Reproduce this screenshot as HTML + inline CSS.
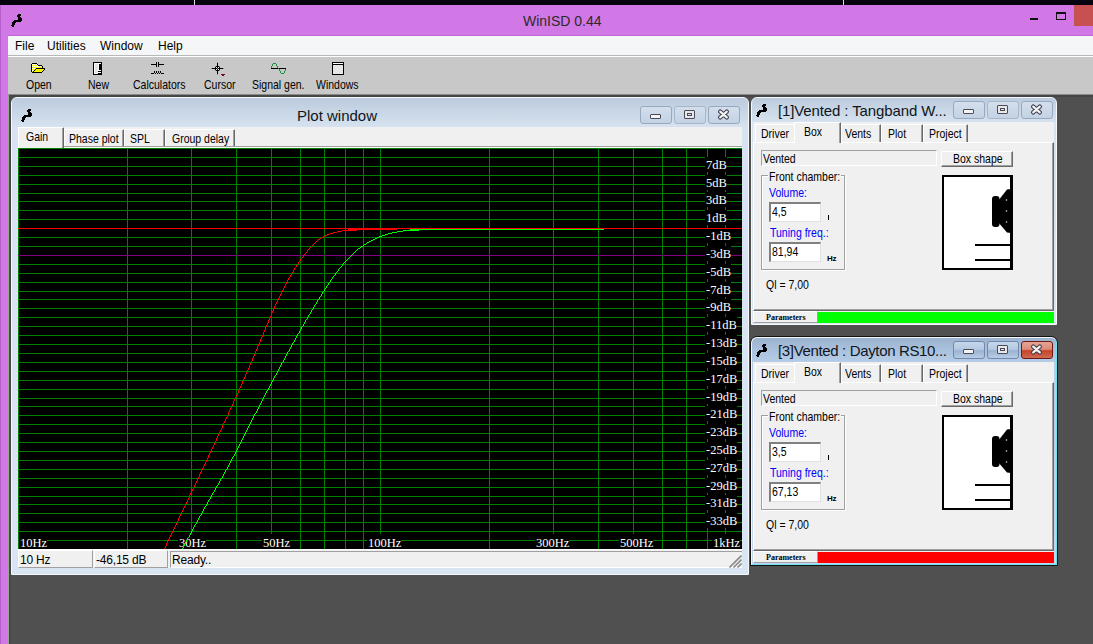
<!DOCTYPE html><html><head><meta charset='utf-8'><style>
*{margin:0;padding:0;box-sizing:border-box}
html,body{width:1093px;height:644px;overflow:hidden;position:relative;background:#505050;font-family:"Liberation Sans",sans-serif}
.a{position:absolute}
.t{position:absolute;white-space:nowrap;line-height:1}
.ms{font-size:10.5px;line-height:1.5;letter-spacing:0px;transform:scaleY(1.176);transform-origin:0 0}
</style></head><body><div class="a" style="left:0px;top:0px;width:1093px;height:5px;background:#07040f"></div><div class="a" style="left:194px;top:0px;width:1px;height:5px;background:#ddd"></div><div class="a" style="left:843px;top:0px;width:1px;height:5px;background:#ddd"></div><div class="a" style="left:0px;top:5px;width:1093px;height:31px;background:#d277e6"></div><div class="a" style="left:0px;top:5px;width:8px;height:639px;background:#d277e6;border-left:1px solid #b660cc"></div><svg class="a" style="left:11px;top:14px" width="11" height="13" shape-rendering="crispEdges"><path d="M7 0h1v1h-1zM8 0h1v1h-1zM9 0h1v1h-1zM6 1h1v1h-1zM7 1h1v1h-1zM8 1h1v1h-1zM9 1h1v1h-1zM6 2h1v1h-1zM7 2h1v1h-1zM8 2h1v1h-1zM7 3h1v1h-1zM8 3h1v1h-1zM9 3h1v1h-1zM7 4h1v1h-1zM8 4h1v1h-1zM9 4h1v1h-1zM10 4h1v1h-1zM7 5h1v1h-1zM8 5h1v1h-1zM9 5h1v1h-1zM10 5h1v1h-1zM3 6h1v1h-1zM4 6h1v1h-1zM5 6h1v1h-1zM6 6h1v1h-1zM7 6h1v1h-1zM8 6h1v1h-1zM9 6h1v1h-1zM10 6h1v1h-1zM2 7h1v1h-1zM3 7h1v1h-1zM4 7h1v1h-1zM5 7h1v1h-1zM6 7h1v1h-1zM7 7h1v1h-1zM8 7h1v1h-1zM9 7h1v1h-1zM1 8h1v1h-1zM2 8h1v1h-1zM3 8h1v1h-1zM4 8h1v1h-1zM1 9h1v1h-1zM2 9h1v1h-1zM3 9h1v1h-1zM1 10h1v1h-1zM2 10h1v1h-1zM3 10h1v1h-1zM0 11h1v1h-1zM1 11h1v1h-1zM2 11h1v1h-1zM1 12h1v1h-1zM2 12h1v1h-1z" fill="#000"/></svg><div class="t" style="left:523px;top:14.36px;font-size:14px;letter-spacing:0px;color:#2a2a2a">WinISD 0.44</div><div class="a" style="left:1030px;top:18px;width:8px;height:2px;background:#111"></div><div class="a" style="left:1056px;top:12px;width:10px;height:8px;border:1px solid #111;border-top-width:2px"></div><div class="a" style="left:1074px;top:5px;width:19px;height:21px;background:#c75050"></div><div class="a" style="left:8px;top:35px;width:1085px;height:22px;background:#f5f6f7;border-top:1px solid #c06ad6"></div><div class="a" style="left:8px;top:55px;width:1085px;height:1px;background:#b8b8b8"></div><div class="a" style="left:8px;top:56px;width:1085px;height:1px;background:#fff"></div><div class="t" style="left:15px;top:39.89px;font-size:12px;letter-spacing:0px;color:#000">File</div><div class="t" style="left:47px;top:39.89px;font-size:12px;letter-spacing:0px;color:#000">Utilities</div><div class="t" style="left:100px;top:39.89px;font-size:12px;letter-spacing:0px;color:#000">Window</div><div class="t" style="left:158px;top:39.89px;font-size:12px;letter-spacing:0px;color:#000">Help</div><div class="a" style="left:8px;top:57px;width:1085px;height:38px;background:#c8c8c8"></div><div class="a" style="left:8px;top:94px;width:1085px;height:1px;background:#8a8a8a"></div><div class="a" style="left:8px;top:95px;width:1085px;height:2px;background:#464646"></div><div class="a" style="left:8px;top:95px;width:1px;height:549px;background:#9aa09a"></div><div class="a" style="left:9px;top:96px;width:2px;height:548px;background:#484848"></div><div class="t ms" style="left:26px;top:76.46px;color:#000;">Open</div><div class="t ms" style="left:88px;top:76.46px;color:#000;">New</div><div class="t ms" style="left:133px;top:76.46px;color:#000;">Calculators</div><div class="t ms" style="left:204px;top:76.46px;color:#000;">Cursor</div><div class="t ms" style="left:252px;top:76.46px;color:#000;">Signal gen.</div><div class="t ms" style="left:316px;top:76.46px;color:#000;">Windows</div><svg class="a" style="left:31px;top:63px" width="14" height="10" shape-rendering="crispEdges"><path d="M1 0h1v1h-1zM2 0h1v1h-1zM3 0h1v1h-1zM4 0h1v1h-1zM5 0h1v1h-1zM0 1h1v1h-1zM6 1h1v1h-1zM0 2h1v1h-1zM7 2h1v1h-1zM8 2h1v1h-1zM9 2h1v1h-1zM10 2h1v1h-1zM0 3h1v1h-1zM11 3h1v1h-1zM0 4h1v1h-1zM11 4h1v1h-1zM0 5h1v1h-1zM5 5h1v1h-1zM6 5h1v1h-1zM7 5h1v1h-1zM8 5h1v1h-1zM9 5h1v1h-1zM10 5h1v1h-1zM11 5h1v1h-1zM12 5h1v1h-1zM13 5h1v1h-1zM0 6h1v1h-1zM4 6h1v1h-1zM13 6h1v1h-1zM0 7h1v1h-1zM3 7h1v1h-1zM12 7h1v1h-1zM0 8h1v1h-1zM2 8h1v1h-1zM11 8h1v1h-1zM1 9h1v1h-1zM2 9h1v1h-1zM3 9h1v1h-1zM4 9h1v1h-1zM5 9h1v1h-1zM6 9h1v1h-1zM7 9h1v1h-1zM8 9h1v1h-1zM9 9h1v1h-1zM10 9h1v1h-1z" fill="#000"/><path d="M1 1h1v1h-1zM3 1h1v1h-1zM5 1h1v1h-1zM2 2h1v1h-1zM4 2h1v1h-1zM6 2h1v1h-1zM1 3h1v1h-1zM3 3h1v1h-1zM5 3h1v1h-1zM7 3h1v1h-1zM9 3h1v1h-1zM2 4h1v1h-1zM4 4h1v1h-1zM6 4h1v1h-1zM8 4h1v1h-1zM10 4h1v1h-1zM1 5h1v1h-1zM3 5h1v1h-1zM2 6h1v1h-1zM1 7h1v1h-1z" fill="#ffffff"/><path d="M2 1h1v1h-1zM4 1h1v1h-1zM1 2h1v1h-1zM3 2h1v1h-1zM5 2h1v1h-1zM2 3h1v1h-1zM4 3h1v1h-1zM6 3h1v1h-1zM8 3h1v1h-1zM10 3h1v1h-1zM1 4h1v1h-1zM3 4h1v1h-1zM5 4h1v1h-1zM7 4h1v1h-1zM9 4h1v1h-1zM2 5h1v1h-1zM4 5h1v1h-1zM1 6h1v1h-1zM3 6h1v1h-1zM5 6h1v1h-1zM6 6h1v1h-1zM7 6h1v1h-1zM8 6h1v1h-1zM9 6h1v1h-1zM10 6h1v1h-1zM11 6h1v1h-1zM12 6h1v1h-1zM2 7h1v1h-1zM5 7h1v1h-1zM7 7h1v1h-1zM9 7h1v1h-1zM11 7h1v1h-1zM1 8h1v1h-1zM3 8h1v1h-1zM4 8h1v1h-1zM5 8h1v1h-1zM6 8h1v1h-1zM7 8h1v1h-1zM8 8h1v1h-1zM9 8h1v1h-1zM10 8h1v1h-1z" fill="#ffff00"/><path d="M4 7h1v1h-1zM6 7h1v1h-1zM8 7h1v1h-1zM10 7h1v1h-1z" fill="#c8c8a0"/></svg><svg class="a" style="left:93px;top:62px" width="9" height="13" shape-rendering="crispEdges"><path d="M0 0h1v1h-1zM0 1h1v1h-1zM0 2h1v1h-1zM0 3h1v1h-1zM0 4h1v1h-1zM0 5h1v1h-1zM0 6h1v1h-1zM0 7h1v1h-1zM0 8h1v1h-1zM0 9h1v1h-1zM0 10h1v1h-1zM0 11h1v1h-1zM0 12h1v1h-1zM1 0h1v1h-1zM1 12h1v1h-1zM2 0h1v1h-1zM2 12h1v1h-1zM3 0h1v1h-1zM3 12h1v1h-1zM4 0h1v1h-1zM4 12h1v1h-1zM5 0h1v1h-1zM5 9h1v1h-1zM5 11h1v1h-1zM5 12h1v1h-1zM6 0h1v1h-1zM6 2h1v1h-1zM6 3h1v1h-1zM6 4h1v1h-1zM6 5h1v1h-1zM6 6h1v1h-1zM6 7h1v1h-1zM6 9h1v1h-1zM6 11h1v1h-1zM6 12h1v1h-1zM7 0h1v1h-1zM7 2h1v1h-1zM7 3h1v1h-1zM7 4h1v1h-1zM7 5h1v1h-1zM7 6h1v1h-1zM7 7h1v1h-1zM7 9h1v1h-1zM7 11h1v1h-1zM7 12h1v1h-1zM8 0h1v1h-1zM8 1h1v1h-1zM8 2h1v1h-1zM8 3h1v1h-1zM8 4h1v1h-1zM8 5h1v1h-1zM8 6h1v1h-1zM8 7h1v1h-1zM8 8h1v1h-1zM8 9h1v1h-1zM8 10h1v1h-1zM8 11h1v1h-1zM8 12h1v1h-1z" fill="#000"/><path d="M1 1h1v1h-1zM1 2h1v1h-1zM1 3h1v1h-1zM1 4h1v1h-1zM1 5h1v1h-1zM1 6h1v1h-1zM1 7h1v1h-1zM1 8h1v1h-1zM1 9h1v1h-1zM1 10h1v1h-1zM1 11h1v1h-1zM2 1h1v1h-1zM2 11h1v1h-1zM3 1h1v1h-1zM3 11h1v1h-1zM4 1h1v1h-1zM4 8h1v1h-1zM4 10h1v1h-1zM5 1h1v1h-1zM5 2h1v1h-1zM5 3h1v1h-1zM5 4h1v1h-1zM5 5h1v1h-1zM5 6h1v1h-1zM5 7h1v1h-1zM5 8h1v1h-1zM5 10h1v1h-1zM6 1h1v1h-1zM6 8h1v1h-1zM6 10h1v1h-1zM7 1h1v1h-1zM7 8h1v1h-1zM7 10h1v1h-1z" fill="#fff"/><path d="M2 2h1v1h-1zM2 3h1v1h-1zM2 4h1v1h-1zM2 5h1v1h-1zM2 6h1v1h-1zM2 7h1v1h-1zM2 8h1v1h-1zM2 9h1v1h-1zM2 10h1v1h-1zM3 2h1v1h-1zM3 3h1v1h-1zM3 4h1v1h-1zM3 5h1v1h-1zM3 6h1v1h-1zM3 7h1v1h-1zM3 8h1v1h-1zM3 9h1v1h-1zM3 10h1v1h-1zM4 2h1v1h-1zM4 3h1v1h-1zM4 4h1v1h-1zM4 5h1v1h-1zM4 6h1v1h-1zM4 7h1v1h-1zM4 9h1v1h-1zM4 11h1v1h-1z" fill="#e4e4e4"/></svg><svg class="a" style="left:151px;top:62px" width="13" height="12" shape-rendering="crispEdges"><path d="M0 2h1v1h-1zM1 2h1v1h-1zM2 2h1v1h-1zM3 2h1v1h-1zM4 2h1v1h-1zM5 2h1v1h-1zM7 2h1v1h-1zM8 2h1v1h-1zM9 2h1v1h-1zM10 2h1v1h-1zM11 2h1v1h-1zM12 2h1v1h-1zM5 0h1v1h-1zM7 0h1v1h-1zM5 1h1v1h-1zM7 1h1v1h-1zM5 2h1v1h-1zM7 2h1v1h-1zM5 3h1v1h-1zM7 3h1v1h-1zM5 4h1v1h-1zM7 4h1v1h-1zM3 9h1v1h-1zM3 10h1v1h-1zM5 9h1v1h-1zM5 10h1v1h-1zM7 9h1v1h-1zM7 10h1v1h-1zM9 9h1v1h-1zM9 10h1v1h-1zM0 11h1v1h-1zM1 11h1v1h-1zM2 11h1v1h-1zM4 11h1v1h-1zM6 11h1v1h-1zM8 11h1v1h-1zM10 11h1v1h-1zM11 11h1v1h-1zM12 11h1v1h-1z" fill="#000"/></svg><svg class="a" style="left:211px;top:62px" width="14" height="14" shape-rendering="crispEdges"><path d="M6 0h1v1h-1zM6 6h1v1h-1zM6 12h1v1h-1zM0 6h1v1h-1zM12 6h1v1h-1zM4 4h1v1h-1zM4 8h1v1h-1zM8 4h1v1h-1zM8 8h1v1h-1z" fill="#c8871a"/><path d="M6 1h1v1h-1zM6 2h1v1h-1zM6 3h1v1h-1zM6 4h1v1h-1zM6 5h1v1h-1zM6 7h1v1h-1zM6 8h1v1h-1zM6 9h1v1h-1zM6 10h1v1h-1zM6 11h1v1h-1zM1 6h1v1h-1zM2 6h1v1h-1zM3 6h1v1h-1zM4 6h1v1h-1zM5 6h1v1h-1zM7 6h1v1h-1zM8 6h1v1h-1zM9 6h1v1h-1zM10 6h1v1h-1zM11 6h1v1h-1zM5 4h1v1h-1zM5 8h1v1h-1zM7 4h1v1h-1zM7 8h1v1h-1zM4 5h1v1h-1zM8 5h1v1h-1zM4 7h1v1h-1zM8 7h1v1h-1z" fill="#000"/><path d="M5 5h1v1h-1zM7 5h1v1h-1zM5 7h1v1h-1zM7 7h1v1h-1z" fill="#f4f4f4"/><path d="M10 12h1v1h-1zM11 12h1v1h-1zM12 12h1v1h-1zM13 12h1v1h-1zM11 13h1v1h-1zM12 13h1v1h-1z" fill="#700a14"/></svg><svg class="a" style="left:271px;top:63px" width="15" height="11" shape-rendering="crispEdges"><path d="M0 5h1v1h-1zM1 5h1v1h-1zM2 5h1v1h-1zM3 5h1v1h-1zM4 5h1v1h-1zM5 5h1v1h-1zM6 5h1v1h-1zM8 5h1v1h-1zM9 5h1v1h-1zM10 5h1v1h-1zM11 5h1v1h-1zM12 5h1v1h-1zM13 5h1v1h-1zM14 5h1v1h-1z" fill="#000"/><path d="M2 0h1v1h-1zM3 0h1v1h-1zM4 0h1v1h-1zM1 1h1v1h-1zM5 1h1v1h-1zM1 2h1v1h-1zM5 2h1v1h-1zM0 3h1v1h-1zM6 3h1v1h-1zM0 4h1v1h-1zM6 4h1v1h-1zM7 5h1v1h-1zM8 6h1v1h-1zM14 6h1v1h-1zM8 7h1v1h-1zM14 7h1v1h-1zM9 8h1v1h-1zM13 8h1v1h-1zM9 9h1v1h-1zM13 9h1v1h-1zM10 10h1v1h-1zM11 10h1v1h-1zM12 10h1v1h-1z" fill="#1e8c3c"/></svg><svg class="a" style="left:332px;top:62px" width="12" height="13" shape-rendering="crispEdges"><path d="M0 0h1v1h-1zM0 1h1v1h-1zM0 2h1v1h-1zM0 3h1v1h-1zM0 4h1v1h-1zM0 5h1v1h-1zM0 6h1v1h-1zM0 7h1v1h-1zM0 8h1v1h-1zM0 9h1v1h-1zM0 10h1v1h-1zM0 11h1v1h-1zM0 12h1v1h-1zM1 0h1v1h-1zM1 2h1v1h-1zM1 12h1v1h-1zM2 0h1v1h-1zM2 2h1v1h-1zM2 12h1v1h-1zM3 0h1v1h-1zM3 2h1v1h-1zM3 12h1v1h-1zM4 0h1v1h-1zM4 2h1v1h-1zM4 12h1v1h-1zM5 0h1v1h-1zM5 2h1v1h-1zM5 12h1v1h-1zM6 0h1v1h-1zM6 2h1v1h-1zM6 12h1v1h-1zM7 0h1v1h-1zM7 2h1v1h-1zM7 12h1v1h-1zM8 0h1v1h-1zM8 2h1v1h-1zM8 12h1v1h-1zM9 0h1v1h-1zM9 2h1v1h-1zM9 12h1v1h-1zM10 0h1v1h-1zM10 2h1v1h-1zM10 12h1v1h-1zM11 0h1v1h-1zM11 1h1v1h-1zM11 2h1v1h-1zM11 3h1v1h-1zM11 4h1v1h-1zM11 5h1v1h-1zM11 6h1v1h-1zM11 7h1v1h-1zM11 8h1v1h-1zM11 9h1v1h-1zM11 10h1v1h-1zM11 11h1v1h-1zM11 12h1v1h-1z" fill="#000"/><path d="M1 1h1v1h-1zM2 1h1v1h-1zM3 1h1v1h-1zM4 1h1v1h-1zM5 1h1v1h-1zM6 1h1v1h-1zM7 1h1v1h-1zM8 1h1v1h-1zM9 1h1v1h-1zM10 1h1v1h-1z" fill="#fff"/><path d="M1 3h1v1h-1zM1 4h1v1h-1zM1 5h1v1h-1zM1 6h1v1h-1zM1 7h1v1h-1zM1 8h1v1h-1zM1 9h1v1h-1zM1 10h1v1h-1zM1 11h1v1h-1zM2 3h1v1h-1zM2 4h1v1h-1zM2 5h1v1h-1zM2 6h1v1h-1zM2 7h1v1h-1zM2 8h1v1h-1zM2 9h1v1h-1zM2 10h1v1h-1zM2 11h1v1h-1zM3 3h1v1h-1zM3 4h1v1h-1zM3 5h1v1h-1zM3 6h1v1h-1zM3 7h1v1h-1zM3 8h1v1h-1zM3 9h1v1h-1zM3 10h1v1h-1zM3 11h1v1h-1zM4 3h1v1h-1zM4 4h1v1h-1zM4 5h1v1h-1zM4 6h1v1h-1zM4 7h1v1h-1zM4 8h1v1h-1zM4 9h1v1h-1zM4 10h1v1h-1zM4 11h1v1h-1zM5 3h1v1h-1zM5 4h1v1h-1zM5 5h1v1h-1zM5 6h1v1h-1zM5 7h1v1h-1zM5 8h1v1h-1zM5 9h1v1h-1zM5 10h1v1h-1zM5 11h1v1h-1zM6 3h1v1h-1zM6 4h1v1h-1zM6 5h1v1h-1zM6 6h1v1h-1zM6 7h1v1h-1zM6 8h1v1h-1zM6 9h1v1h-1zM6 10h1v1h-1zM6 11h1v1h-1zM7 3h1v1h-1zM7 4h1v1h-1zM7 5h1v1h-1zM7 6h1v1h-1zM7 7h1v1h-1zM7 8h1v1h-1zM7 9h1v1h-1zM7 10h1v1h-1zM7 11h1v1h-1zM8 3h1v1h-1zM8 4h1v1h-1zM8 5h1v1h-1zM8 6h1v1h-1zM8 7h1v1h-1zM8 8h1v1h-1zM8 9h1v1h-1zM8 10h1v1h-1zM8 11h1v1h-1zM9 3h1v1h-1zM9 4h1v1h-1zM9 5h1v1h-1zM9 6h1v1h-1zM9 7h1v1h-1zM9 8h1v1h-1zM9 9h1v1h-1zM9 10h1v1h-1zM9 11h1v1h-1zM10 3h1v1h-1zM10 4h1v1h-1zM10 5h1v1h-1zM10 6h1v1h-1zM10 7h1v1h-1zM10 8h1v1h-1zM10 9h1v1h-1zM10 10h1v1h-1zM10 11h1v1h-1z" fill="#e6e6e6"/></svg><div class="a" style="left:11px;top:97px;width:738px;height:478px;border-radius:6px 6px 0 0;background:linear-gradient(#bccbdd 0px,#c9d7e6 15px,#d7e3f0 30px,#d9e5f2 100%);border:1px solid #f4f7fb"></div><svg class="a" style="left:21px;top:109px" width="11" height="13" shape-rendering="crispEdges"><path d="M7 0h1v1h-1zM8 0h1v1h-1zM9 0h1v1h-1zM6 1h1v1h-1zM7 1h1v1h-1zM8 1h1v1h-1zM9 1h1v1h-1zM6 2h1v1h-1zM7 2h1v1h-1zM8 2h1v1h-1zM7 3h1v1h-1zM8 3h1v1h-1zM9 3h1v1h-1zM7 4h1v1h-1zM8 4h1v1h-1zM9 4h1v1h-1zM10 4h1v1h-1zM7 5h1v1h-1zM8 5h1v1h-1zM9 5h1v1h-1zM10 5h1v1h-1zM3 6h1v1h-1zM4 6h1v1h-1zM5 6h1v1h-1zM6 6h1v1h-1zM7 6h1v1h-1zM8 6h1v1h-1zM9 6h1v1h-1zM10 6h1v1h-1zM2 7h1v1h-1zM3 7h1v1h-1zM4 7h1v1h-1zM5 7h1v1h-1zM6 7h1v1h-1zM7 7h1v1h-1zM8 7h1v1h-1zM9 7h1v1h-1zM1 8h1v1h-1zM2 8h1v1h-1zM3 8h1v1h-1zM4 8h1v1h-1zM1 9h1v1h-1zM2 9h1v1h-1zM3 9h1v1h-1zM1 10h1v1h-1zM2 10h1v1h-1zM3 10h1v1h-1zM0 11h1v1h-1zM1 11h1v1h-1zM2 11h1v1h-1zM1 12h1v1h-1zM2 12h1v1h-1z" fill="#000"/></svg><div class="t" style="left:297px;top:108.24px;font-size:15px;letter-spacing:0px;color:#101520">Plot window</div><div class="a" style="left:640px;top:106px;width:32px;height:18px;border:1px solid #98a8c0;border-radius:3px;background:linear-gradient(#d4dfec 0%,#cbd8e8 50%,#c3d2e4 100%)"></div><div class="a" style="left:650px;top:114px;width:11px;height:5px;background:#f4f4f4;border:1px solid #4a4a58;border-radius:1px"></div><div class="a" style="left:674px;top:106px;width:32px;height:18px;border:1px solid #a8b6ca;border-radius:3px;background:linear-gradient(#d4dfec 0%,#cbd8e8 50%,#c3d2e4 100%)"></div><div class="a" style="left:684px;top:110px;width:11px;height:9px;background:#e8e8e8;border:1px solid #4a4a58;border-radius:1px"></div><div class="a" style="left:687px;top:113px;width:5px;height:3px;border:1px solid #4a4a58;background:#dde"></div><div class="a" style="left:708px;top:106px;width:32px;height:18px;border:1px solid #98a8c0;border-radius:3px;background:linear-gradient(#d4dfec 0%,#cbd8e8 50%,#c3d2e4 100%)"></div><svg class="a" style="left:717px;top:109px" width="13" height="11"><path d="M3.2 2.6 L9.8 8.4 M9.8 2.6 L3.2 8.4" stroke="#3c3c4a" stroke-width="4.2" stroke-linecap="round"/><path d="M3.2 2.6 L9.8 8.4 M9.8 2.6 L3.2 8.4" stroke="#f4f4f4" stroke-width="2.2" stroke-linecap="round"/></svg><div class="a" style="left:18px;top:127px;width:724px;height:441px;background:#f0f0f0"></div><div class="a" style="left:18px;top:146px;width:724px;height:1px;background:#a0a0a0"></div><div class="a" style="left:18px;top:147px;width:724px;height:1px;background:#fff"></div><div class="a" style="left:64px;top:129px;width:60px;height:17px;background:#f0f0f0;border-left:1px solid #fff;border-top:1px solid #fff;border-right:1px solid #696969;box-shadow:inset -1px 0 0 #a0a0a0;border-top-right-radius:1px"></div><div class="t ms" style="left:69px;top:130.46px;color:#000;">Phase plot</div><div class="a" style="left:124px;top:129px;width:41px;height:17px;background:#f0f0f0;border-left:1px solid #fff;border-top:1px solid #fff;border-right:1px solid #696969;box-shadow:inset -1px 0 0 #a0a0a0;border-top-right-radius:1px"></div><div class="t ms" style="left:130px;top:130.46px;color:#000;">SPL</div><div class="a" style="left:165px;top:129px;width:70px;height:17px;background:#f0f0f0;border-left:1px solid #fff;border-top:1px solid #fff;border-right:1px solid #696969;box-shadow:inset -1px 0 0 #a0a0a0;border-top-right-radius:1px"></div><div class="t ms" style="left:172px;top:130.46px;color:#000;">Group delay</div><div class="a" style="left:18px;top:127px;width:46px;height:21px;background:#f0f0f0;border-left:1px solid #fff;border-top:1px solid #fff;border-right:1px solid #696969;box-shadow:inset -1px 0 0 #a0a0a0;border-top-right-radius:1px"></div><div class="t ms" style="left:26px;top:128.46px;color:#000;">Gain</div><div class="a" style="left:18px;top:549px;width:724px;height:1px;background:#fff"></div><div class="a" style="left:18px;top:550px;width:75px;height:18px;border-top:1px solid #fff;border-left:1px solid #fff;border-right:1px solid #a0a0a0;border-bottom:1px solid #a0a0a0"></div><div class="t" style="left:20px;top:554.09px;font-size:12px;letter-spacing:-0.2px;color:#000">10 Hz</div><div class="a" style="left:94px;top:550px;width:74px;height:18px;border-top:1px solid #fff;border-left:1px solid #fff;border-right:1px solid #a0a0a0;border-bottom:1px solid #a0a0a0"></div><div class="t" style="left:96px;top:554.09px;font-size:12px;letter-spacing:-0.2px;color:#000">-46,15 dB</div><div class="a" style="left:170px;top:551px;width:572px;height:17px;border-top:1px solid #a0a0a0;border-left:1px solid #a0a0a0;border-bottom:1px solid #fff"></div><div class="t" style="left:172px;top:554.09px;font-size:12px;letter-spacing:-0.2px;color:#000">Ready..</div><svg class="a" style="left:729px;top:555px" width="13" height="13"><path d="M12.5 0.5 L0.5 12.5 M12.5 4.5 L4.5 12.5 M12.5 8.5 L8.5 12.5" stroke="#8c8c8c" stroke-width="1.6"/></svg><div class="a" style="left:751px;top:97px;width:306px;height:228px;border-radius:6px 6px 0 0;background:linear-gradient(#bccbdd 0px,#c9d7e6 12px,#d6e2ef 25px,#d9e5f2 100%);border:1px solid #f4f7fb"></div><svg class="a" style="left:756px;top:104px" width="11" height="13" shape-rendering="crispEdges"><path d="M7 0h1v1h-1zM8 0h1v1h-1zM9 0h1v1h-1zM6 1h1v1h-1zM7 1h1v1h-1zM8 1h1v1h-1zM9 1h1v1h-1zM6 2h1v1h-1zM7 2h1v1h-1zM8 2h1v1h-1zM7 3h1v1h-1zM8 3h1v1h-1zM9 3h1v1h-1zM7 4h1v1h-1zM8 4h1v1h-1zM9 4h1v1h-1zM10 4h1v1h-1zM7 5h1v1h-1zM8 5h1v1h-1zM9 5h1v1h-1zM10 5h1v1h-1zM3 6h1v1h-1zM4 6h1v1h-1zM5 6h1v1h-1zM6 6h1v1h-1zM7 6h1v1h-1zM8 6h1v1h-1zM9 6h1v1h-1zM10 6h1v1h-1zM2 7h1v1h-1zM3 7h1v1h-1zM4 7h1v1h-1zM5 7h1v1h-1zM6 7h1v1h-1zM7 7h1v1h-1zM8 7h1v1h-1zM9 7h1v1h-1zM1 8h1v1h-1zM2 8h1v1h-1zM3 8h1v1h-1zM4 8h1v1h-1zM1 9h1v1h-1zM2 9h1v1h-1zM3 9h1v1h-1zM1 10h1v1h-1zM2 10h1v1h-1zM3 10h1v1h-1zM0 11h1v1h-1zM1 11h1v1h-1zM2 11h1v1h-1zM1 12h1v1h-1zM2 12h1v1h-1z" fill="#000"/></svg><div class="t" style="left:778px;top:103.44px;font-size:15px;letter-spacing:-0.12px;color:#101520">[1]Vented : Tangband W...</div><div class="a" style="left:953px;top:101px;width:32px;height:18px;border:1px solid #98a8c0;border-radius:3px;background:linear-gradient(#d4dfec 0%,#cbd8e8 50%,#c3d2e4 100%)"></div><div class="a" style="left:963px;top:109px;width:11px;height:5px;background:#f4f4f4;border:1px solid #4a4a58;border-radius:1px"></div><div class="a" style="left:987px;top:101px;width:32px;height:18px;border:1px solid #a8b6ca;border-radius:3px;background:linear-gradient(#d4dfec 0%,#cbd8e8 50%,#c3d2e4 100%)"></div><div class="a" style="left:997px;top:105px;width:11px;height:9px;background:#e8e8e8;border:1px solid #4a4a58;border-radius:1px"></div><div class="a" style="left:1000px;top:108px;width:5px;height:3px;border:1px solid #4a4a58;background:#dde"></div><div class="a" style="left:1021px;top:101px;width:32px;height:18px;border:1px solid #98a8c0;border-radius:3px;background:linear-gradient(#d4dfec 0%,#cbd8e8 50%,#c3d2e4 100%)"></div><svg class="a" style="left:1030px;top:104px" width="13" height="11"><path d="M3.2 2.6 L9.8 8.4 M9.8 2.6 L3.2 8.4" stroke="#3c3c4a" stroke-width="4.2" stroke-linecap="round"/><path d="M3.2 2.6 L9.8 8.4 M9.8 2.6 L3.2 8.4" stroke="#f4f4f4" stroke-width="2.2" stroke-linecap="round"/></svg><div class="a" style="left:753px;top:122px;width:301px;height:200px;background:#f0f0f0"></div><div class="a" style="left:753px;top:142px;width:301px;height:169px;border-top:1px solid #fff;border-left:1px solid #fff;border-right:1px solid #696969;border-bottom:1px solid #696969;box-shadow:inset -1px -1px 0 #a0a0a0"></div><div class="a" style="left:755px;top:124px;width:41px;height:18px;background:#f0f0f0;border-left:1px solid #fff;border-top:1px solid #fff;border-right:1px solid #696969;box-shadow:inset -1px 0 0 #a0a0a0;border-top-right-radius:1px"></div><div class="t ms" style="left:761px;top:125.46px;color:#000;">Driver</div><div class="a" style="left:841px;top:124px;width:40px;height:18px;background:#f0f0f0;border-left:1px solid #fff;border-top:1px solid #fff;border-right:1px solid #696969;box-shadow:inset -1px 0 0 #a0a0a0;border-top-right-radius:1px"></div><div class="t ms" style="left:845px;top:125.46px;color:#000;">Vents</div><div class="a" style="left:881px;top:124px;width:42px;height:18px;background:#f0f0f0;border-left:1px solid #fff;border-top:1px solid #fff;border-right:1px solid #696969;box-shadow:inset -1px 0 0 #a0a0a0;border-top-right-radius:1px"></div><div class="t ms" style="left:888px;top:125.46px;color:#000;">Plot</div><div class="a" style="left:923px;top:124px;width:45px;height:18px;background:#f0f0f0;border-left:1px solid #fff;border-top:1px solid #fff;border-right:1px solid #696969;box-shadow:inset -1px 0 0 #a0a0a0;border-top-right-radius:1px"></div><div class="t ms" style="left:929px;top:125.46px;color:#000;">Project</div><div class="a" style="left:794px;top:122px;width:47px;height:21px;background:#f0f0f0;border-left:1px solid #fff;border-top:1px solid #fff;border-right:1px solid #696969;box-shadow:inset -1px 0 0 #a0a0a0;border-top-right-radius:1px"></div><div class="t ms" style="left:804px;top:123.46px;color:#000;">Box</div><div class="a" style="left:761px;top:150px;width:176px;height:16px;border:1px solid #a0a0a0;border-right-color:#fff;border-bottom-color:#fff"></div><div class="t ms" style="left:763px;top:150.46px;color:#000;">Vented</div><div class="a" style="left:941px;top:151px;width:72px;height:16px;background:#f0f0f0;border:1px solid #fff;border-right-color:#696969;border-bottom-color:#696969;box-shadow:inset -1px -1px 0 #a0a0a0"></div><div class="t ms" style="left:953px;top:150.46px;color:#000;">Box shape</div><div class="a" style="left:761px;top:175px;width:84px;height:95px;border:1px solid #a0a0a0;box-shadow:inset 1px 1px 0 #fff, 1px 1px 0 #fff"></div><div class="t ms" style="left:768px;top:168.46px;color:#000;background:#f0f0f0;padding:0 1px">Front chamber:</div><div class="t ms" style="left:769px;top:184.46px;color:#0000ff;">Volume:</div><div class="t ms" style="left:770px;top:224.46px;color:#0000ff;">Tuning freq.:</div><div class="a" style="left:769px;top:202px;width:52px;height:20px;background:#fff;border-top:2px solid #808080;border-left:2px solid #808080;border-right:1px solid #e0e0e0;border-bottom:1px solid #e0e0e0"></div><div class="t ms" style="left:772px;top:203.46px;color:#000;">4,5</div><div class="a" style="left:769px;top:242px;width:52px;height:20px;background:#fff;border-top:2px solid #808080;border-left:2px solid #808080;border-right:1px solid #e0e0e0;border-bottom:1px solid #e0e0e0"></div><div class="t ms" style="left:772px;top:243.46px;color:#000;">81,94</div><div class="a" style="left:828px;top:215px;width:1px;height:5px;background:#000"></div><div class="t" style="left:827px;top:255px;font-size:8px;font-weight:bold;color:#000;letter-spacing:-0.3px">Hz</div><div class="t ms" style="left:766px;top:276.46px;color:#000;">Ql = 7,00</div><svg class="a" style="left:942px;top:175px" width="72" height="96" shape-rendering="crispEdges"><rect x="0" y="0" width="71" height="95" fill="#fff"/><path d="M0 0H71V95H0Z M2 2V93H68V2Z" fill="#000" fill-rule="evenodd"/><rect x="33" y="69" width="36" height="2" fill="#000"/><rect x="33" y="84" width="36" height="2" fill="#000"/><rect x="50" y="21" width="7.5" height="31" rx="3" fill="#000" shape-rendering="auto"/><path d="M56 26 L65 14.5 L69 14 L69 58 L65 57.5 L56 47 Z" fill="#000" shape-rendering="auto"/><circle cx="64.5" cy="25" r="0.8" fill="#ddd" shape-rendering="auto"/><circle cx="64.5" cy="36" r="0.8" fill="#ddd" shape-rendering="auto"/><circle cx="64.5" cy="47" r="0.8" fill="#ddd" shape-rendering="auto"/></svg><div class="a" style="left:753px;top:311px;width:65px;height:12px;background:#f0f0f0;border-top:1px solid #fff;border-left:1px solid #fff;border-right:1px solid #a0a0a0;border-bottom:1px solid #a0a0a0"></div><div class="t" style="left:766px;top:314px;font-family:'Liberation Serif',serif;font-size:8px;font-weight:bold;color:#000">Parameters</div><div class="a" style="left:818px;top:312px;width:236px;height:11px;background:#00ff00"></div><div class="a" style="left:750px;top:336px;width:308px;height:230px;border-radius:7px 7px 0 0;border:1px solid #141414"></div><div class="a" style="left:751px;top:337px;width:306px;height:228px;border-radius:6px 6px 0 0;background:linear-gradient(#9cb3d0 0px,#a9c1dd 12px,#b6cde7 25px,#c2d6ee 100%);border:1px solid #f4f7fb;border-right-color:#70e0f4;border-bottom-color:#70e0f4"></div><svg class="a" style="left:756px;top:344px" width="11" height="13" shape-rendering="crispEdges"><path d="M7 0h1v1h-1zM8 0h1v1h-1zM9 0h1v1h-1zM6 1h1v1h-1zM7 1h1v1h-1zM8 1h1v1h-1zM9 1h1v1h-1zM6 2h1v1h-1zM7 2h1v1h-1zM8 2h1v1h-1zM7 3h1v1h-1zM8 3h1v1h-1zM9 3h1v1h-1zM7 4h1v1h-1zM8 4h1v1h-1zM9 4h1v1h-1zM10 4h1v1h-1zM7 5h1v1h-1zM8 5h1v1h-1zM9 5h1v1h-1zM10 5h1v1h-1zM3 6h1v1h-1zM4 6h1v1h-1zM5 6h1v1h-1zM6 6h1v1h-1zM7 6h1v1h-1zM8 6h1v1h-1zM9 6h1v1h-1zM10 6h1v1h-1zM2 7h1v1h-1zM3 7h1v1h-1zM4 7h1v1h-1zM5 7h1v1h-1zM6 7h1v1h-1zM7 7h1v1h-1zM8 7h1v1h-1zM9 7h1v1h-1zM1 8h1v1h-1zM2 8h1v1h-1zM3 8h1v1h-1zM4 8h1v1h-1zM1 9h1v1h-1zM2 9h1v1h-1zM3 9h1v1h-1zM1 10h1v1h-1zM2 10h1v1h-1zM3 10h1v1h-1zM0 11h1v1h-1zM1 11h1v1h-1zM2 11h1v1h-1zM1 12h1v1h-1zM2 12h1v1h-1z" fill="#000"/></svg><div class="t" style="left:778px;top:343.44px;font-size:15px;letter-spacing:-0.35px;color:#101520">[3]Vented : Dayton RS10...</div><div class="a" style="left:953px;top:341px;width:32px;height:18px;border:1px solid #7388a8;border-radius:3px;background:linear-gradient(#c4d6ea 0%,#b4c9e2 45%,#9cb4d2 55%,#b6cce6 100%)"></div><div class="a" style="left:963px;top:349px;width:11px;height:5px;background:#f4f4f4;border:1px solid #4a4a58;border-radius:1px"></div><div class="a" style="left:987px;top:341px;width:32px;height:18px;border:1px solid #7388a8;border-radius:3px;background:linear-gradient(#c4d6ea 0%,#b4c9e2 45%,#9cb4d2 55%,#b6cce6 100%)"></div><div class="a" style="left:997px;top:345px;width:11px;height:9px;background:#e8e8e8;border:1px solid #4a4a58;border-radius:1px"></div><div class="a" style="left:1000px;top:348px;width:5px;height:3px;border:1px solid #4a4a58;background:#dde"></div><div class="a" style="left:1021px;top:341px;width:32px;height:18px;border:1px solid #6b1a1a;border-radius:3px;background:linear-gradient(#e8a392 0%,#dc8c7a 45%,#c6432a 55%,#cf6b4f 100%)"></div><svg class="a" style="left:1030px;top:344px" width="13" height="11"><path d="M3.2 2.6 L9.8 8.4 M9.8 2.6 L3.2 8.4" stroke="#3c3c4a" stroke-width="4.2" stroke-linecap="round"/><path d="M3.2 2.6 L9.8 8.4 M9.8 2.6 L3.2 8.4" stroke="#f4f4f4" stroke-width="2.2" stroke-linecap="round"/></svg><div class="a" style="left:753px;top:362px;width:301px;height:200px;background:#f0f0f0"></div><div class="a" style="left:753px;top:382px;width:301px;height:169px;border-top:1px solid #fff;border-left:1px solid #fff;border-right:1px solid #696969;border-bottom:1px solid #696969;box-shadow:inset -1px -1px 0 #a0a0a0"></div><div class="a" style="left:755px;top:364px;width:41px;height:18px;background:#f0f0f0;border-left:1px solid #fff;border-top:1px solid #fff;border-right:1px solid #696969;box-shadow:inset -1px 0 0 #a0a0a0;border-top-right-radius:1px"></div><div class="t ms" style="left:761px;top:365.46px;color:#000;">Driver</div><div class="a" style="left:841px;top:364px;width:40px;height:18px;background:#f0f0f0;border-left:1px solid #fff;border-top:1px solid #fff;border-right:1px solid #696969;box-shadow:inset -1px 0 0 #a0a0a0;border-top-right-radius:1px"></div><div class="t ms" style="left:845px;top:365.46px;color:#000;">Vents</div><div class="a" style="left:881px;top:364px;width:42px;height:18px;background:#f0f0f0;border-left:1px solid #fff;border-top:1px solid #fff;border-right:1px solid #696969;box-shadow:inset -1px 0 0 #a0a0a0;border-top-right-radius:1px"></div><div class="t ms" style="left:888px;top:365.46px;color:#000;">Plot</div><div class="a" style="left:923px;top:364px;width:45px;height:18px;background:#f0f0f0;border-left:1px solid #fff;border-top:1px solid #fff;border-right:1px solid #696969;box-shadow:inset -1px 0 0 #a0a0a0;border-top-right-radius:1px"></div><div class="t ms" style="left:929px;top:365.46px;color:#000;">Project</div><div class="a" style="left:794px;top:362px;width:47px;height:21px;background:#f0f0f0;border-left:1px solid #fff;border-top:1px solid #fff;border-right:1px solid #696969;box-shadow:inset -1px 0 0 #a0a0a0;border-top-right-radius:1px"></div><div class="t ms" style="left:804px;top:363.46px;color:#000;">Box</div><div class="a" style="left:761px;top:390px;width:176px;height:16px;border:1px solid #a0a0a0;border-right-color:#fff;border-bottom-color:#fff"></div><div class="t ms" style="left:763px;top:390.46px;color:#000;">Vented</div><div class="a" style="left:941px;top:391px;width:72px;height:16px;background:#f0f0f0;border:1px solid #fff;border-right-color:#696969;border-bottom-color:#696969;box-shadow:inset -1px -1px 0 #a0a0a0"></div><div class="t ms" style="left:953px;top:390.46px;color:#000;">Box shape</div><div class="a" style="left:761px;top:415px;width:84px;height:95px;border:1px solid #a0a0a0;box-shadow:inset 1px 1px 0 #fff, 1px 1px 0 #fff"></div><div class="t ms" style="left:768px;top:408.46px;color:#000;background:#f0f0f0;padding:0 1px">Front chamber:</div><div class="t ms" style="left:769px;top:424.46px;color:#0000ff;">Volume:</div><div class="t ms" style="left:770px;top:464.46px;color:#0000ff;">Tuning freq.:</div><div class="a" style="left:769px;top:442px;width:52px;height:20px;background:#fff;border-top:2px solid #808080;border-left:2px solid #808080;border-right:1px solid #e0e0e0;border-bottom:1px solid #e0e0e0"></div><div class="t ms" style="left:772px;top:443.46px;color:#000;">3,5</div><div class="a" style="left:769px;top:482px;width:52px;height:20px;background:#fff;border-top:2px solid #808080;border-left:2px solid #808080;border-right:1px solid #e0e0e0;border-bottom:1px solid #e0e0e0"></div><div class="t ms" style="left:772px;top:483.46px;color:#000;">67,13</div><div class="a" style="left:828px;top:455px;width:1px;height:5px;background:#000"></div><div class="t" style="left:827px;top:495px;font-size:8px;font-weight:bold;color:#000;letter-spacing:-0.3px">Hz</div><div class="t ms" style="left:766px;top:516.46px;color:#000;">Ql = 7,00</div><svg class="a" style="left:942px;top:415px" width="72" height="96" shape-rendering="crispEdges"><rect x="0" y="0" width="71" height="95" fill="#fff"/><path d="M0 0H71V95H0Z M2 2V93H68V2Z" fill="#000" fill-rule="evenodd"/><rect x="33" y="69" width="36" height="2" fill="#000"/><rect x="33" y="84" width="36" height="2" fill="#000"/><rect x="50" y="21" width="7.5" height="31" rx="3" fill="#000" shape-rendering="auto"/><path d="M56 26 L65 14.5 L69 14 L69 58 L65 57.5 L56 47 Z" fill="#000" shape-rendering="auto"/><circle cx="64.5" cy="25" r="0.8" fill="#ddd" shape-rendering="auto"/><circle cx="64.5" cy="36" r="0.8" fill="#ddd" shape-rendering="auto"/><circle cx="64.5" cy="47" r="0.8" fill="#ddd" shape-rendering="auto"/></svg><div class="a" style="left:753px;top:551px;width:65px;height:12px;background:#f0f0f0;border-top:1px solid #fff;border-left:1px solid #fff;border-right:1px solid #a0a0a0;border-bottom:1px solid #a0a0a0"></div><div class="t" style="left:766px;top:554px;font-family:'Liberation Serif',serif;font-size:8px;font-weight:bold;color:#000">Parameters</div><div class="a" style="left:818px;top:552px;width:236px;height:11px;background:#ff0000"></div><svg class="a" style="left:0;top:0" width="1093" height="644" shape-rendering="crispEdges"><rect x="18" y="148" width="724" height="401" fill="#000"/><path d="M18 148h724v1h-724zM18 157h724v1h-724zM18 166h724v1h-724zM18 175h724v1h-724zM18 184h724v1h-724zM18 193h724v1h-724zM18 201h724v1h-724zM18 210h724v1h-724zM18 219h724v1h-724zM18 228h724v1h-724zM18 237h724v1h-724zM18 246h724v1h-724zM18 255h724v1h-724zM18 264h724v1h-724zM18 273h724v1h-724zM18 282h724v1h-724zM18 291h724v1h-724zM18 299h724v1h-724zM18 308h724v1h-724zM18 317h724v1h-724zM18 326h724v1h-724zM18 335h724v1h-724zM18 344h724v1h-724zM18 353h724v1h-724zM18 362h724v1h-724zM18 371h724v1h-724zM18 380h724v1h-724zM18 389h724v1h-724zM18 398h724v1h-724zM18 406h724v1h-724zM18 415h724v1h-724zM18 424h724v1h-724zM18 433h724v1h-724zM18 442h724v1h-724zM18 451h724v1h-724zM18 460h724v1h-724zM18 469h724v1h-724zM18 478h724v1h-724zM18 487h724v1h-724zM18 496h724v1h-724zM18 504h724v1h-724zM18 513h724v1h-724zM18 522h724v1h-724zM18 531h724v1h-724zM18 540h724v1h-724zM18 148h1v401h-1zM127 148h1v401h-1zM191 148h1v401h-1zM236 148h1v401h-1zM271 148h1v401h-1zM300 148h1v401h-1zM324 148h1v401h-1zM345 148h1v401h-1zM363 148h1v401h-1zM380 148h1v401h-1zM489 148h1v401h-1zM553 148h1v401h-1zM598 148h1v401h-1zM633 148h1v401h-1zM662 148h1v401h-1zM686 148h1v401h-1zM707 148h1v401h-1zM725 148h1v401h-1z" fill="#008000"/><rect x="18" y="255" width="724" height="1" fill="#800080"/><g font-family="Liberation Serif" font-size="12.5" fill="#fff" shape-rendering="auto"><rect x="705" y="157" width="22" height="15" fill="#000"/><text x="706" y="169">7dB</text><rect x="705" y="175" width="22" height="15" fill="#000"/><text x="706" y="187">5dB</text><rect x="705" y="192" width="22" height="15" fill="#000"/><text x="706" y="204">3dB</text><rect x="705" y="210" width="22" height="15" fill="#000"/><text x="706" y="222">1dB</text><rect x="705" y="228" width="26" height="15" fill="#000"/><text x="706" y="240">-1dB</text><rect x="705" y="246" width="26" height="15" fill="#000"/><text x="706" y="258">-3dB</text><rect x="705" y="264" width="26" height="15" fill="#000"/><text x="706" y="276">-5dB</text><rect x="705" y="282" width="26" height="15" fill="#000"/><text x="706" y="294">-7dB</text><rect x="705" y="299" width="26" height="15" fill="#000"/><text x="706" y="311">-9dB</text><rect x="705" y="317" width="32" height="15" fill="#000"/><text x="706" y="329">-11dB</text><rect x="705" y="335" width="32" height="15" fill="#000"/><text x="706" y="347">-13dB</text><rect x="705" y="353" width="32" height="15" fill="#000"/><text x="706" y="365">-15dB</text><rect x="705" y="371" width="32" height="15" fill="#000"/><text x="706" y="383">-17dB</text><rect x="705" y="389" width="32" height="15" fill="#000"/><text x="706" y="401">-19dB</text><rect x="705" y="406" width="32" height="15" fill="#000"/><text x="706" y="418">-21dB</text><rect x="705" y="424" width="32" height="15" fill="#000"/><text x="706" y="436">-23dB</text><rect x="705" y="442" width="32" height="15" fill="#000"/><text x="706" y="454">-25dB</text><rect x="705" y="460" width="32" height="15" fill="#000"/><text x="706" y="472">-27dB</text><rect x="705" y="478" width="32" height="15" fill="#000"/><text x="706" y="490">-29dB</text><rect x="705" y="495" width="32" height="15" fill="#000"/><text x="706" y="507">-31dB</text><rect x="705" y="513" width="32" height="15" fill="#000"/><text x="706" y="525">-33dB</text><rect x="19" y="534" width="28" height="15" fill="#000"/><text x="20" y="547">10Hz</text><rect x="178" y="534" width="28" height="15" fill="#000"/><text x="179" y="547">30Hz</text><rect x="262" y="534" width="28" height="15" fill="#000"/><text x="263" y="547">50Hz</text><rect x="367" y="534" width="34" height="15" fill="#000"/><text x="368" y="547">100Hz</text><rect x="535" y="534" width="34" height="15" fill="#000"/><text x="536" y="547">300Hz</text><rect x="619" y="534" width="34" height="15" fill="#000"/><text x="620" y="547">500Hz</text><rect x="712" y="534" width="28" height="15" fill="#000"/><text x="713" y="547">1kHz</text></g><rect x="18" y="228" width="724" height="1" fill="#f00"/><g fill="#f00"><rect x="164" y="548" width="1" height="1"/><rect x="165" y="546" width="1" height="2"/><rect x="166" y="543" width="1" height="3"/><rect x="167" y="541" width="1" height="2"/><rect x="168" y="539" width="1" height="2"/><rect x="169" y="537" width="1" height="2"/><rect x="170" y="535" width="1" height="2"/><rect x="171" y="533" width="1" height="2"/><rect x="172" y="531" width="1" height="2"/><rect x="173" y="529" width="1" height="2"/><rect x="174" y="527" width="1" height="2"/><rect x="175" y="525" width="1" height="2"/><rect x="176" y="523" width="1" height="2"/><rect x="177" y="521" width="1" height="2"/><rect x="178" y="518" width="1" height="3"/><rect x="179" y="516" width="1" height="2"/><rect x="180" y="514" width="1" height="2"/><rect x="181" y="512" width="1" height="2"/><rect x="182" y="510" width="1" height="2"/><rect x="183" y="508" width="1" height="2"/><rect x="184" y="506" width="1" height="2"/><rect x="185" y="504" width="1" height="2"/><rect x="186" y="502" width="1" height="2"/><rect x="187" y="500" width="1" height="2"/><rect x="188" y="498" width="1" height="2"/><rect x="189" y="495" width="1" height="3"/><rect x="190" y="493" width="1" height="2"/><rect x="191" y="491" width="1" height="2"/><rect x="192" y="489" width="1" height="2"/><rect x="193" y="487" width="1" height="2"/><rect x="194" y="485" width="1" height="2"/><rect x="195" y="483" width="1" height="2"/><rect x="196" y="481" width="1" height="2"/><rect x="197" y="479" width="1" height="2"/><rect x="198" y="477" width="1" height="2"/><rect x="199" y="474" width="1" height="3"/><rect x="200" y="472" width="1" height="2"/><rect x="201" y="470" width="1" height="2"/><rect x="202" y="468" width="1" height="2"/><rect x="203" y="466" width="1" height="2"/><rect x="204" y="464" width="1" height="2"/><rect x="205" y="462" width="1" height="2"/><rect x="206" y="460" width="1" height="2"/><rect x="207" y="458" width="1" height="2"/><rect x="208" y="455" width="1" height="3"/><rect x="209" y="453" width="1" height="2"/><rect x="210" y="451" width="1" height="2"/><rect x="211" y="449" width="1" height="2"/><rect x="212" y="447" width="1" height="2"/><rect x="213" y="445" width="1" height="2"/><rect x="214" y="443" width="1" height="2"/><rect x="215" y="441" width="1" height="2"/><rect x="216" y="438" width="1" height="3"/><rect x="217" y="436" width="1" height="2"/><rect x="218" y="434" width="1" height="2"/><rect x="219" y="432" width="1" height="2"/><rect x="220" y="430" width="1" height="2"/><rect x="221" y="428" width="1" height="2"/><rect x="222" y="425" width="1" height="3"/><rect x="223" y="423" width="1" height="2"/><rect x="224" y="421" width="1" height="2"/><rect x="225" y="419" width="1" height="2"/><rect x="226" y="417" width="1" height="2"/><rect x="227" y="415" width="1" height="2"/><rect x="228" y="412" width="1" height="3"/><rect x="229" y="410" width="1" height="2"/><rect x="230" y="408" width="1" height="2"/><rect x="231" y="406" width="1" height="2"/><rect x="232" y="404" width="1" height="2"/><rect x="233" y="401" width="1" height="3"/><rect x="234" y="399" width="1" height="2"/><rect x="235" y="397" width="1" height="2"/><rect x="236" y="395" width="1" height="2"/><rect x="237" y="393" width="1" height="2"/><rect x="238" y="390" width="1" height="3"/><rect x="239" y="388" width="1" height="2"/><rect x="240" y="386" width="1" height="2"/><rect x="241" y="384" width="1" height="2"/><rect x="242" y="381" width="1" height="3"/><rect x="243" y="379" width="1" height="2"/><rect x="244" y="377" width="1" height="2"/><rect x="245" y="374" width="1" height="3"/><rect x="246" y="372" width="1" height="2"/><rect x="247" y="370" width="1" height="2"/><rect x="248" y="368" width="1" height="2"/><rect x="249" y="365" width="1" height="3"/><rect x="250" y="363" width="1" height="2"/><rect x="251" y="361" width="1" height="2"/><rect x="252" y="358" width="1" height="3"/><rect x="253" y="356" width="1" height="2"/><rect x="254" y="354" width="1" height="2"/><rect x="255" y="351" width="1" height="3"/><rect x="256" y="349" width="1" height="2"/><rect x="257" y="346" width="1" height="3"/><rect x="258" y="344" width="1" height="2"/><rect x="259" y="342" width="1" height="2"/><rect x="260" y="339" width="1" height="3"/><rect x="261" y="337" width="1" height="2"/><rect x="262" y="335" width="1" height="2"/><rect x="263" y="332" width="1" height="3"/><rect x="264" y="330" width="1" height="2"/><rect x="265" y="327" width="1" height="3"/><rect x="266" y="325" width="1" height="2"/><rect x="267" y="323" width="1" height="2"/><rect x="268" y="320" width="1" height="3"/><rect x="269" y="318" width="1" height="2"/><rect x="270" y="316" width="1" height="2"/><rect x="271" y="313" width="1" height="3"/><rect x="272" y="311" width="1" height="2"/><rect x="273" y="309" width="1" height="2"/><rect x="274" y="306" width="1" height="3"/><rect x="275" y="304" width="1" height="2"/><rect x="276" y="302" width="1" height="2"/><rect x="277" y="300" width="1" height="2"/><rect x="278" y="298" width="1" height="2"/><rect x="279" y="296" width="1" height="2"/><rect x="280" y="294" width="1" height="2"/><rect x="281" y="292" width="1" height="2"/><rect x="282" y="290" width="1" height="2"/><rect x="283" y="288" width="1" height="2"/><rect x="284" y="286" width="1" height="2"/><rect x="285" y="284" width="1" height="2"/><rect x="286" y="282" width="1" height="2"/><rect x="287" y="280" width="1" height="2"/><rect x="288" y="278" width="1" height="2"/><rect x="289" y="277" width="1" height="1"/><rect x="290" y="275" width="1" height="2"/><rect x="291" y="273" width="1" height="2"/><rect x="292" y="272" width="1" height="1"/><rect x="293" y="270" width="1" height="2"/><rect x="294" y="268" width="1" height="2"/><rect x="295" y="267" width="1" height="1"/><rect x="296" y="265" width="1" height="2"/><rect x="297" y="264" width="1" height="1"/><rect x="298" y="262" width="1" height="2"/><rect x="299" y="261" width="1" height="1"/><rect x="300" y="259" width="1" height="2"/><rect x="301" y="258" width="1" height="1"/><rect x="302" y="257" width="1" height="1"/><rect x="303" y="255" width="1" height="2"/><rect x="304" y="254" width="1" height="1"/><rect x="305" y="253" width="1" height="1"/><rect x="306" y="252" width="1" height="1"/><rect x="307" y="250" width="1" height="2"/><rect x="308" y="249" width="1" height="1"/><rect x="309" y="248" width="1" height="1"/><rect x="310" y="247" width="1" height="1"/><rect x="311" y="246" width="1" height="1"/><rect x="312" y="245" width="1" height="1"/><rect x="313" y="244" width="1" height="1"/><rect x="314" y="243" width="1" height="1"/><rect x="315" y="242" width="1" height="1"/><rect x="316" y="241" width="1" height="1"/><rect x="317" y="240" width="1" height="1"/><rect x="318" y="239" width="1" height="1"/><rect x="319" y="239" width="1" height="1"/><rect x="320" y="238" width="1" height="1"/><rect x="321" y="237" width="1" height="1"/><rect x="322" y="237" width="1" height="1"/><rect x="323" y="236" width="1" height="1"/><rect x="324" y="236" width="1" height="1"/><rect x="325" y="235" width="1" height="1"/><rect x="326" y="235" width="1" height="1"/><rect x="327" y="234" width="1" height="1"/><rect x="328" y="234" width="1" height="1"/><rect x="329" y="234" width="1" height="1"/><rect x="330" y="233" width="1" height="1"/><rect x="331" y="233" width="1" height="1"/><rect x="332" y="233" width="1" height="1"/><rect x="333" y="232" width="1" height="1"/><rect x="334" y="232" width="1" height="1"/><rect x="335" y="232" width="1" height="1"/><rect x="336" y="232" width="1" height="1"/><rect x="337" y="231" width="1" height="1"/><rect x="338" y="231" width="1" height="1"/><rect x="339" y="231" width="1" height="1"/><rect x="340" y="231" width="1" height="1"/><rect x="341" y="231" width="1" height="1"/><rect x="342" y="230" width="1" height="1"/><rect x="343" y="230" width="1" height="1"/><rect x="344" y="230" width="1" height="1"/><rect x="345" y="230" width="1" height="1"/><rect x="346" y="230" width="1" height="1"/><rect x="347" y="230" width="1" height="1"/><rect x="348" y="229" width="1" height="2"/><rect x="349" y="229" width="1" height="2"/><rect x="350" y="229" width="1" height="2"/><rect x="351" y="229" width="1" height="2"/><rect x="352" y="229" width="1" height="2"/><rect x="353" y="229" width="1" height="2"/><rect x="354" y="229" width="1" height="2"/><rect x="355" y="229" width="1" height="2"/><rect x="356" y="229" width="1" height="2"/><rect x="357" y="229" width="1" height="1"/><rect x="358" y="229" width="1" height="1"/><rect x="359" y="229" width="1" height="1"/><rect x="360" y="229" width="1" height="1"/><rect x="361" y="229" width="1" height="1"/><rect x="362" y="229" width="1" height="1"/><rect x="363" y="229" width="1" height="1"/><rect x="364" y="229" width="1" height="1"/><rect x="365" y="229" width="1" height="1"/><rect x="366" y="229" width="1" height="1"/><rect x="367" y="229" width="1" height="1"/><rect x="368" y="229" width="1" height="1"/><rect x="369" y="229" width="1" height="1"/><rect x="370" y="229" width="1" height="1"/><rect x="371" y="229" width="1" height="1"/><rect x="372" y="229" width="1" height="1"/><rect x="373" y="229" width="1" height="1"/><rect x="374" y="229" width="1" height="1"/><rect x="375" y="229" width="1" height="1"/><rect x="376" y="229" width="1" height="1"/><rect x="377" y="229" width="1" height="1"/><rect x="378" y="229" width="1" height="1"/><rect x="379" y="229" width="1" height="1"/><rect x="380" y="229" width="1" height="1"/><rect x="381" y="229" width="1" height="1"/><rect x="382" y="229" width="1" height="1"/><rect x="383" y="229" width="1" height="1"/><rect x="384" y="229" width="1" height="1"/><rect x="385" y="229" width="1" height="1"/><rect x="386" y="229" width="1" height="1"/><rect x="387" y="229" width="1" height="1"/><rect x="388" y="229" width="1" height="1"/><rect x="389" y="229" width="1" height="1"/><rect x="390" y="229" width="1" height="1"/><rect x="391" y="229" width="1" height="1"/><rect x="392" y="229" width="1" height="1"/><rect x="393" y="229" width="1" height="1"/><rect x="394" y="229" width="1" height="1"/><rect x="395" y="229" width="1" height="1"/><rect x="396" y="229" width="1" height="1"/></g><g fill="#0f0"><rect x="182" y="548" width="1" height="1"/><rect x="183" y="546" width="1" height="2"/><rect x="184" y="544" width="1" height="2"/><rect x="185" y="542" width="1" height="2"/><rect x="186" y="540" width="1" height="2"/><rect x="187" y="538" width="1" height="2"/><rect x="188" y="537" width="1" height="1"/><rect x="189" y="535" width="1" height="2"/><rect x="190" y="533" width="1" height="2"/><rect x="191" y="531" width="1" height="2"/><rect x="192" y="529" width="1" height="2"/><rect x="193" y="527" width="1" height="2"/><rect x="194" y="525" width="1" height="2"/><rect x="195" y="524" width="1" height="1"/><rect x="196" y="522" width="1" height="2"/><rect x="197" y="520" width="1" height="2"/><rect x="198" y="518" width="1" height="2"/><rect x="199" y="516" width="1" height="2"/><rect x="200" y="515" width="1" height="1"/><rect x="201" y="513" width="1" height="2"/><rect x="202" y="511" width="1" height="2"/><rect x="203" y="509" width="1" height="2"/><rect x="204" y="507" width="1" height="2"/><rect x="205" y="506" width="1" height="1"/><rect x="206" y="504" width="1" height="2"/><rect x="207" y="502" width="1" height="2"/><rect x="208" y="500" width="1" height="2"/><rect x="209" y="499" width="1" height="1"/><rect x="210" y="497" width="1" height="2"/><rect x="211" y="495" width="1" height="2"/><rect x="212" y="493" width="1" height="2"/><rect x="213" y="492" width="1" height="1"/><rect x="214" y="490" width="1" height="2"/><rect x="215" y="488" width="1" height="2"/><rect x="216" y="486" width="1" height="2"/><rect x="217" y="485" width="1" height="1"/><rect x="218" y="483" width="1" height="2"/><rect x="219" y="481" width="1" height="2"/><rect x="220" y="479" width="1" height="2"/><rect x="221" y="478" width="1" height="1"/><rect x="222" y="476" width="1" height="2"/><rect x="223" y="474" width="1" height="2"/><rect x="224" y="472" width="1" height="2"/><rect x="225" y="470" width="1" height="2"/><rect x="226" y="469" width="1" height="1"/><rect x="227" y="467" width="1" height="2"/><rect x="228" y="465" width="1" height="2"/><rect x="229" y="463" width="1" height="2"/><rect x="230" y="461" width="1" height="2"/><rect x="231" y="459" width="1" height="2"/><rect x="232" y="457" width="1" height="2"/><rect x="233" y="456" width="1" height="1"/><rect x="234" y="454" width="1" height="2"/><rect x="235" y="452" width="1" height="2"/><rect x="236" y="450" width="1" height="2"/><rect x="237" y="448" width="1" height="2"/><rect x="238" y="446" width="1" height="2"/><rect x="239" y="444" width="1" height="2"/><rect x="240" y="442" width="1" height="2"/><rect x="241" y="440" width="1" height="2"/><rect x="242" y="438" width="1" height="2"/><rect x="243" y="436" width="1" height="2"/><rect x="244" y="434" width="1" height="2"/><rect x="245" y="432" width="1" height="2"/><rect x="246" y="430" width="1" height="2"/><rect x="247" y="428" width="1" height="2"/><rect x="248" y="426" width="1" height="2"/><rect x="249" y="424" width="1" height="2"/><rect x="250" y="422" width="1" height="2"/><rect x="251" y="420" width="1" height="2"/><rect x="252" y="418" width="1" height="2"/><rect x="253" y="416" width="1" height="2"/><rect x="254" y="414" width="1" height="2"/><rect x="255" y="413" width="1" height="1"/><rect x="256" y="411" width="1" height="2"/><rect x="257" y="409" width="1" height="2"/><rect x="258" y="407" width="1" height="2"/><rect x="259" y="405" width="1" height="2"/><rect x="260" y="403" width="1" height="2"/><rect x="261" y="401" width="1" height="2"/><rect x="262" y="399" width="1" height="2"/><rect x="263" y="397" width="1" height="2"/><rect x="264" y="395" width="1" height="2"/><rect x="265" y="393" width="1" height="2"/><rect x="266" y="391" width="1" height="2"/><rect x="267" y="390" width="1" height="1"/><rect x="268" y="388" width="1" height="2"/><rect x="269" y="386" width="1" height="2"/><rect x="270" y="384" width="1" height="2"/><rect x="271" y="382" width="1" height="2"/><rect x="272" y="380" width="1" height="2"/><rect x="273" y="378" width="1" height="2"/><rect x="274" y="376" width="1" height="2"/><rect x="275" y="375" width="1" height="1"/><rect x="276" y="373" width="1" height="2"/><rect x="277" y="371" width="1" height="2"/><rect x="278" y="369" width="1" height="2"/><rect x="279" y="367" width="1" height="2"/><rect x="280" y="365" width="1" height="2"/><rect x="281" y="363" width="1" height="2"/><rect x="282" y="362" width="1" height="1"/><rect x="283" y="360" width="1" height="2"/><rect x="284" y="358" width="1" height="2"/><rect x="285" y="356" width="1" height="2"/><rect x="286" y="354" width="1" height="2"/><rect x="287" y="352" width="1" height="2"/><rect x="288" y="351" width="1" height="1"/><rect x="289" y="349" width="1" height="2"/><rect x="290" y="347" width="1" height="2"/><rect x="291" y="345" width="1" height="2"/><rect x="292" y="343" width="1" height="2"/><rect x="293" y="342" width="1" height="1"/><rect x="294" y="340" width="1" height="2"/><rect x="295" y="338" width="1" height="2"/><rect x="296" y="336" width="1" height="2"/><rect x="297" y="334" width="1" height="2"/><rect x="298" y="333" width="1" height="1"/><rect x="299" y="331" width="1" height="2"/><rect x="300" y="329" width="1" height="2"/><rect x="301" y="327" width="1" height="2"/><rect x="302" y="326" width="1" height="1"/><rect x="303" y="324" width="1" height="2"/><rect x="304" y="322" width="1" height="2"/><rect x="305" y="320" width="1" height="2"/><rect x="306" y="319" width="1" height="1"/><rect x="307" y="317" width="1" height="2"/><rect x="308" y="315" width="1" height="2"/><rect x="309" y="314" width="1" height="1"/><rect x="310" y="312" width="1" height="2"/><rect x="311" y="310" width="1" height="2"/><rect x="312" y="309" width="1" height="1"/><rect x="313" y="307" width="1" height="2"/><rect x="314" y="305" width="1" height="2"/><rect x="315" y="304" width="1" height="1"/><rect x="316" y="302" width="1" height="2"/><rect x="317" y="300" width="1" height="2"/><rect x="318" y="299" width="1" height="1"/><rect x="319" y="297" width="1" height="2"/><rect x="320" y="296" width="1" height="1"/><rect x="321" y="294" width="1" height="2"/><rect x="322" y="292" width="1" height="2"/><rect x="323" y="291" width="1" height="1"/><rect x="324" y="289" width="1" height="2"/><rect x="325" y="288" width="1" height="1"/><rect x="326" y="286" width="1" height="2"/><rect x="327" y="285" width="1" height="1"/><rect x="328" y="283" width="1" height="2"/><rect x="329" y="282" width="1" height="1"/><rect x="330" y="280" width="1" height="2"/><rect x="331" y="279" width="1" height="1"/><rect x="332" y="277" width="1" height="2"/><rect x="333" y="276" width="1" height="1"/><rect x="334" y="275" width="1" height="1"/><rect x="335" y="273" width="1" height="2"/><rect x="336" y="272" width="1" height="1"/><rect x="337" y="271" width="1" height="1"/><rect x="338" y="269" width="1" height="2"/><rect x="339" y="268" width="1" height="1"/><rect x="340" y="267" width="1" height="1"/><rect x="341" y="266" width="1" height="1"/><rect x="342" y="264" width="1" height="2"/><rect x="343" y="263" width="1" height="1"/><rect x="344" y="262" width="1" height="1"/><rect x="345" y="261" width="1" height="1"/><rect x="346" y="260" width="1" height="1"/><rect x="347" y="259" width="1" height="1"/><rect x="348" y="258" width="1" height="1"/><rect x="349" y="257" width="1" height="1"/><rect x="350" y="256" width="1" height="1"/><rect x="351" y="255" width="1" height="1"/><rect x="352" y="254" width="1" height="1"/><rect x="353" y="253" width="1" height="1"/><rect x="354" y="252" width="1" height="1"/><rect x="355" y="251" width="1" height="1"/><rect x="356" y="250" width="1" height="1"/><rect x="357" y="249" width="1" height="1"/><rect x="358" y="248" width="1" height="1"/><rect x="359" y="248" width="1" height="1"/><rect x="360" y="247" width="1" height="1"/><rect x="361" y="246" width="1" height="1"/><rect x="362" y="246" width="1" height="1"/><rect x="363" y="245" width="1" height="1"/><rect x="364" y="244" width="1" height="1"/><rect x="365" y="244" width="1" height="1"/><rect x="366" y="243" width="1" height="1"/><rect x="367" y="242" width="1" height="1"/><rect x="368" y="242" width="1" height="1"/><rect x="369" y="241" width="1" height="1"/><rect x="370" y="241" width="1" height="1"/><rect x="371" y="240" width="1" height="1"/><rect x="372" y="240" width="1" height="1"/><rect x="373" y="239" width="1" height="1"/><rect x="374" y="239" width="1" height="1"/><rect x="375" y="238" width="1" height="1"/><rect x="376" y="238" width="1" height="1"/><rect x="377" y="237" width="1" height="1"/><rect x="378" y="237" width="1" height="1"/><rect x="379" y="236" width="1" height="1"/><rect x="380" y="236" width="1" height="1"/><rect x="381" y="236" width="1" height="1"/><rect x="382" y="235" width="1" height="1"/><rect x="383" y="235" width="1" height="1"/><rect x="384" y="235" width="1" height="1"/><rect x="385" y="234" width="1" height="1"/><rect x="386" y="234" width="1" height="1"/><rect x="387" y="234" width="1" height="1"/><rect x="388" y="233" width="1" height="1"/><rect x="389" y="233" width="1" height="1"/><rect x="390" y="233" width="1" height="1"/><rect x="391" y="233" width="1" height="1"/><rect x="392" y="232" width="1" height="1"/><rect x="393" y="232" width="1" height="1"/><rect x="394" y="232" width="1" height="1"/><rect x="395" y="232" width="1" height="1"/><rect x="396" y="232" width="1" height="1"/><rect x="397" y="231" width="1" height="1"/><rect x="398" y="231" width="1" height="1"/><rect x="399" y="231" width="1" height="1"/><rect x="400" y="231" width="1" height="1"/><rect x="401" y="231" width="1" height="1"/><rect x="402" y="231" width="1" height="1"/><rect x="403" y="230" width="1" height="1"/><rect x="404" y="230" width="1" height="1"/><rect x="405" y="230" width="1" height="1"/><rect x="406" y="230" width="1" height="1"/><rect x="407" y="230" width="1" height="1"/><rect x="408" y="230" width="1" height="1"/><rect x="409" y="230" width="1" height="1"/><rect x="410" y="229" width="1" height="2"/><rect x="411" y="229" width="1" height="2"/><rect x="412" y="229" width="1" height="2"/><rect x="413" y="229" width="1" height="2"/><rect x="414" y="229" width="1" height="2"/><rect x="415" y="229" width="1" height="2"/><rect x="416" y="229" width="1" height="2"/><rect x="417" y="229" width="1" height="2"/><rect x="418" y="229" width="1" height="2"/><rect x="419" y="229" width="1" height="1"/><rect x="420" y="229" width="1" height="1"/><rect x="421" y="229" width="1" height="1"/><rect x="422" y="229" width="1" height="1"/><rect x="423" y="229" width="1" height="1"/><rect x="424" y="229" width="1" height="1"/><rect x="425" y="229" width="1" height="1"/><rect x="426" y="229" width="1" height="1"/><rect x="427" y="229" width="1" height="1"/><rect x="428" y="229" width="1" height="1"/><rect x="429" y="229" width="1" height="1"/><rect x="430" y="229" width="1" height="1"/><rect x="431" y="229" width="1" height="1"/><rect x="432" y="229" width="1" height="1"/><rect x="433" y="229" width="1" height="1"/><rect x="434" y="229" width="1" height="1"/><rect x="435" y="229" width="1" height="1"/><rect x="436" y="229" width="1" height="1"/><rect x="437" y="229" width="1" height="1"/><rect x="438" y="229" width="1" height="1"/><rect x="439" y="229" width="1" height="1"/><rect x="440" y="229" width="1" height="1"/><rect x="441" y="229" width="1" height="1"/><rect x="442" y="229" width="1" height="1"/><rect x="443" y="229" width="1" height="1"/><rect x="444" y="229" width="1" height="1"/><rect x="445" y="229" width="1" height="1"/><rect x="446" y="229" width="1" height="1"/><rect x="447" y="229" width="1" height="1"/><rect x="448" y="229" width="1" height="1"/><rect x="449" y="229" width="1" height="1"/><rect x="450" y="229" width="1" height="1"/><rect x="451" y="229" width="1" height="1"/><rect x="452" y="229" width="1" height="1"/><rect x="453" y="229" width="1" height="1"/><rect x="454" y="229" width="1" height="1"/><rect x="455" y="229" width="1" height="1"/><rect x="456" y="229" width="1" height="1"/><rect x="457" y="229" width="1" height="1"/><rect x="458" y="229" width="1" height="1"/><rect x="459" y="229" width="1" height="1"/><rect x="460" y="229" width="1" height="1"/><rect x="461" y="229" width="1" height="1"/><rect x="462" y="229" width="1" height="1"/><rect x="463" y="229" width="1" height="1"/><rect x="464" y="229" width="1" height="1"/><rect x="465" y="229" width="1" height="1"/><rect x="466" y="229" width="1" height="1"/><rect x="467" y="229" width="1" height="1"/><rect x="468" y="229" width="1" height="1"/><rect x="469" y="229" width="1" height="1"/><rect x="470" y="229" width="1" height="1"/><rect x="471" y="229" width="1" height="1"/><rect x="472" y="229" width="1" height="1"/><rect x="473" y="229" width="1" height="1"/><rect x="474" y="229" width="1" height="1"/><rect x="475" y="229" width="1" height="1"/><rect x="476" y="229" width="1" height="1"/><rect x="477" y="229" width="1" height="1"/><rect x="478" y="229" width="1" height="1"/><rect x="479" y="229" width="1" height="1"/><rect x="480" y="229" width="1" height="1"/><rect x="481" y="229" width="1" height="1"/><rect x="482" y="229" width="1" height="1"/><rect x="483" y="229" width="1" height="1"/><rect x="484" y="229" width="1" height="1"/><rect x="485" y="229" width="1" height="1"/><rect x="486" y="229" width="1" height="1"/><rect x="487" y="229" width="1" height="1"/><rect x="488" y="229" width="1" height="1"/><rect x="489" y="229" width="1" height="1"/><rect x="490" y="229" width="1" height="1"/><rect x="491" y="229" width="1" height="1"/><rect x="492" y="229" width="1" height="1"/><rect x="493" y="229" width="1" height="1"/><rect x="494" y="229" width="1" height="1"/><rect x="495" y="229" width="1" height="1"/><rect x="496" y="229" width="1" height="1"/><rect x="497" y="229" width="1" height="1"/><rect x="498" y="229" width="1" height="1"/><rect x="499" y="229" width="1" height="1"/><rect x="500" y="229" width="1" height="1"/><rect x="501" y="229" width="1" height="1"/><rect x="502" y="229" width="1" height="1"/><rect x="503" y="229" width="1" height="1"/><rect x="504" y="229" width="1" height="1"/><rect x="505" y="229" width="1" height="1"/><rect x="506" y="229" width="1" height="1"/><rect x="507" y="229" width="1" height="1"/><rect x="508" y="229" width="1" height="1"/><rect x="509" y="229" width="1" height="1"/><rect x="510" y="229" width="1" height="1"/><rect x="511" y="229" width="1" height="1"/><rect x="512" y="229" width="1" height="1"/><rect x="513" y="229" width="1" height="1"/><rect x="514" y="229" width="1" height="1"/><rect x="515" y="229" width="1" height="1"/><rect x="516" y="229" width="1" height="1"/><rect x="517" y="229" width="1" height="1"/><rect x="518" y="229" width="1" height="1"/><rect x="519" y="229" width="1" height="1"/><rect x="520" y="229" width="1" height="1"/><rect x="521" y="229" width="1" height="1"/><rect x="522" y="229" width="1" height="1"/><rect x="523" y="229" width="1" height="1"/><rect x="524" y="229" width="1" height="1"/><rect x="525" y="229" width="1" height="1"/><rect x="526" y="229" width="1" height="1"/><rect x="527" y="229" width="1" height="1"/><rect x="528" y="229" width="1" height="1"/><rect x="529" y="229" width="1" height="1"/><rect x="530" y="229" width="1" height="1"/><rect x="531" y="229" width="1" height="1"/><rect x="532" y="229" width="1" height="1"/><rect x="533" y="229" width="1" height="1"/><rect x="534" y="229" width="1" height="1"/><rect x="535" y="229" width="1" height="1"/><rect x="536" y="229" width="1" height="1"/><rect x="537" y="229" width="1" height="1"/><rect x="538" y="229" width="1" height="1"/><rect x="539" y="229" width="1" height="1"/><rect x="540" y="229" width="1" height="1"/><rect x="541" y="229" width="1" height="1"/><rect x="542" y="229" width="1" height="1"/><rect x="543" y="229" width="1" height="1"/><rect x="544" y="229" width="1" height="1"/><rect x="545" y="229" width="1" height="1"/><rect x="546" y="229" width="1" height="1"/><rect x="547" y="229" width="1" height="1"/><rect x="548" y="229" width="1" height="1"/><rect x="549" y="229" width="1" height="1"/><rect x="550" y="229" width="1" height="1"/><rect x="551" y="229" width="1" height="1"/><rect x="552" y="229" width="1" height="1"/><rect x="553" y="229" width="1" height="1"/><rect x="554" y="229" width="1" height="1"/><rect x="555" y="229" width="1" height="1"/><rect x="556" y="229" width="1" height="1"/><rect x="557" y="229" width="1" height="1"/><rect x="558" y="229" width="1" height="1"/><rect x="559" y="229" width="1" height="1"/><rect x="560" y="229" width="1" height="1"/><rect x="561" y="229" width="1" height="1"/><rect x="562" y="229" width="1" height="1"/><rect x="563" y="229" width="1" height="1"/><rect x="564" y="229" width="1" height="1"/><rect x="565" y="229" width="1" height="1"/><rect x="566" y="229" width="1" height="1"/><rect x="567" y="229" width="1" height="1"/><rect x="568" y="229" width="1" height="1"/><rect x="569" y="229" width="1" height="1"/><rect x="570" y="229" width="1" height="1"/><rect x="571" y="229" width="1" height="1"/><rect x="572" y="229" width="1" height="1"/><rect x="573" y="229" width="1" height="1"/><rect x="574" y="229" width="1" height="1"/><rect x="575" y="229" width="1" height="1"/><rect x="576" y="229" width="1" height="1"/><rect x="577" y="229" width="1" height="1"/><rect x="578" y="229" width="1" height="1"/><rect x="579" y="229" width="1" height="1"/><rect x="580" y="229" width="1" height="1"/><rect x="581" y="229" width="1" height="1"/><rect x="582" y="229" width="1" height="1"/><rect x="583" y="229" width="1" height="1"/><rect x="584" y="229" width="1" height="1"/><rect x="585" y="229" width="1" height="1"/><rect x="586" y="229" width="1" height="1"/><rect x="587" y="229" width="1" height="1"/><rect x="588" y="229" width="1" height="1"/><rect x="589" y="229" width="1" height="1"/><rect x="590" y="229" width="1" height="1"/><rect x="591" y="229" width="1" height="1"/><rect x="592" y="229" width="1" height="1"/><rect x="593" y="229" width="1" height="1"/><rect x="594" y="229" width="1" height="1"/><rect x="595" y="229" width="1" height="1"/><rect x="596" y="229" width="1" height="1"/><rect x="597" y="229" width="1" height="1"/><rect x="598" y="229" width="1" height="1"/><rect x="599" y="229" width="1" height="1"/><rect x="600" y="229" width="1" height="1"/><rect x="601" y="229" width="1" height="1"/><rect x="602" y="229" width="1" height="1"/><rect x="603" y="229" width="1" height="1"/></g></svg></body></html>
